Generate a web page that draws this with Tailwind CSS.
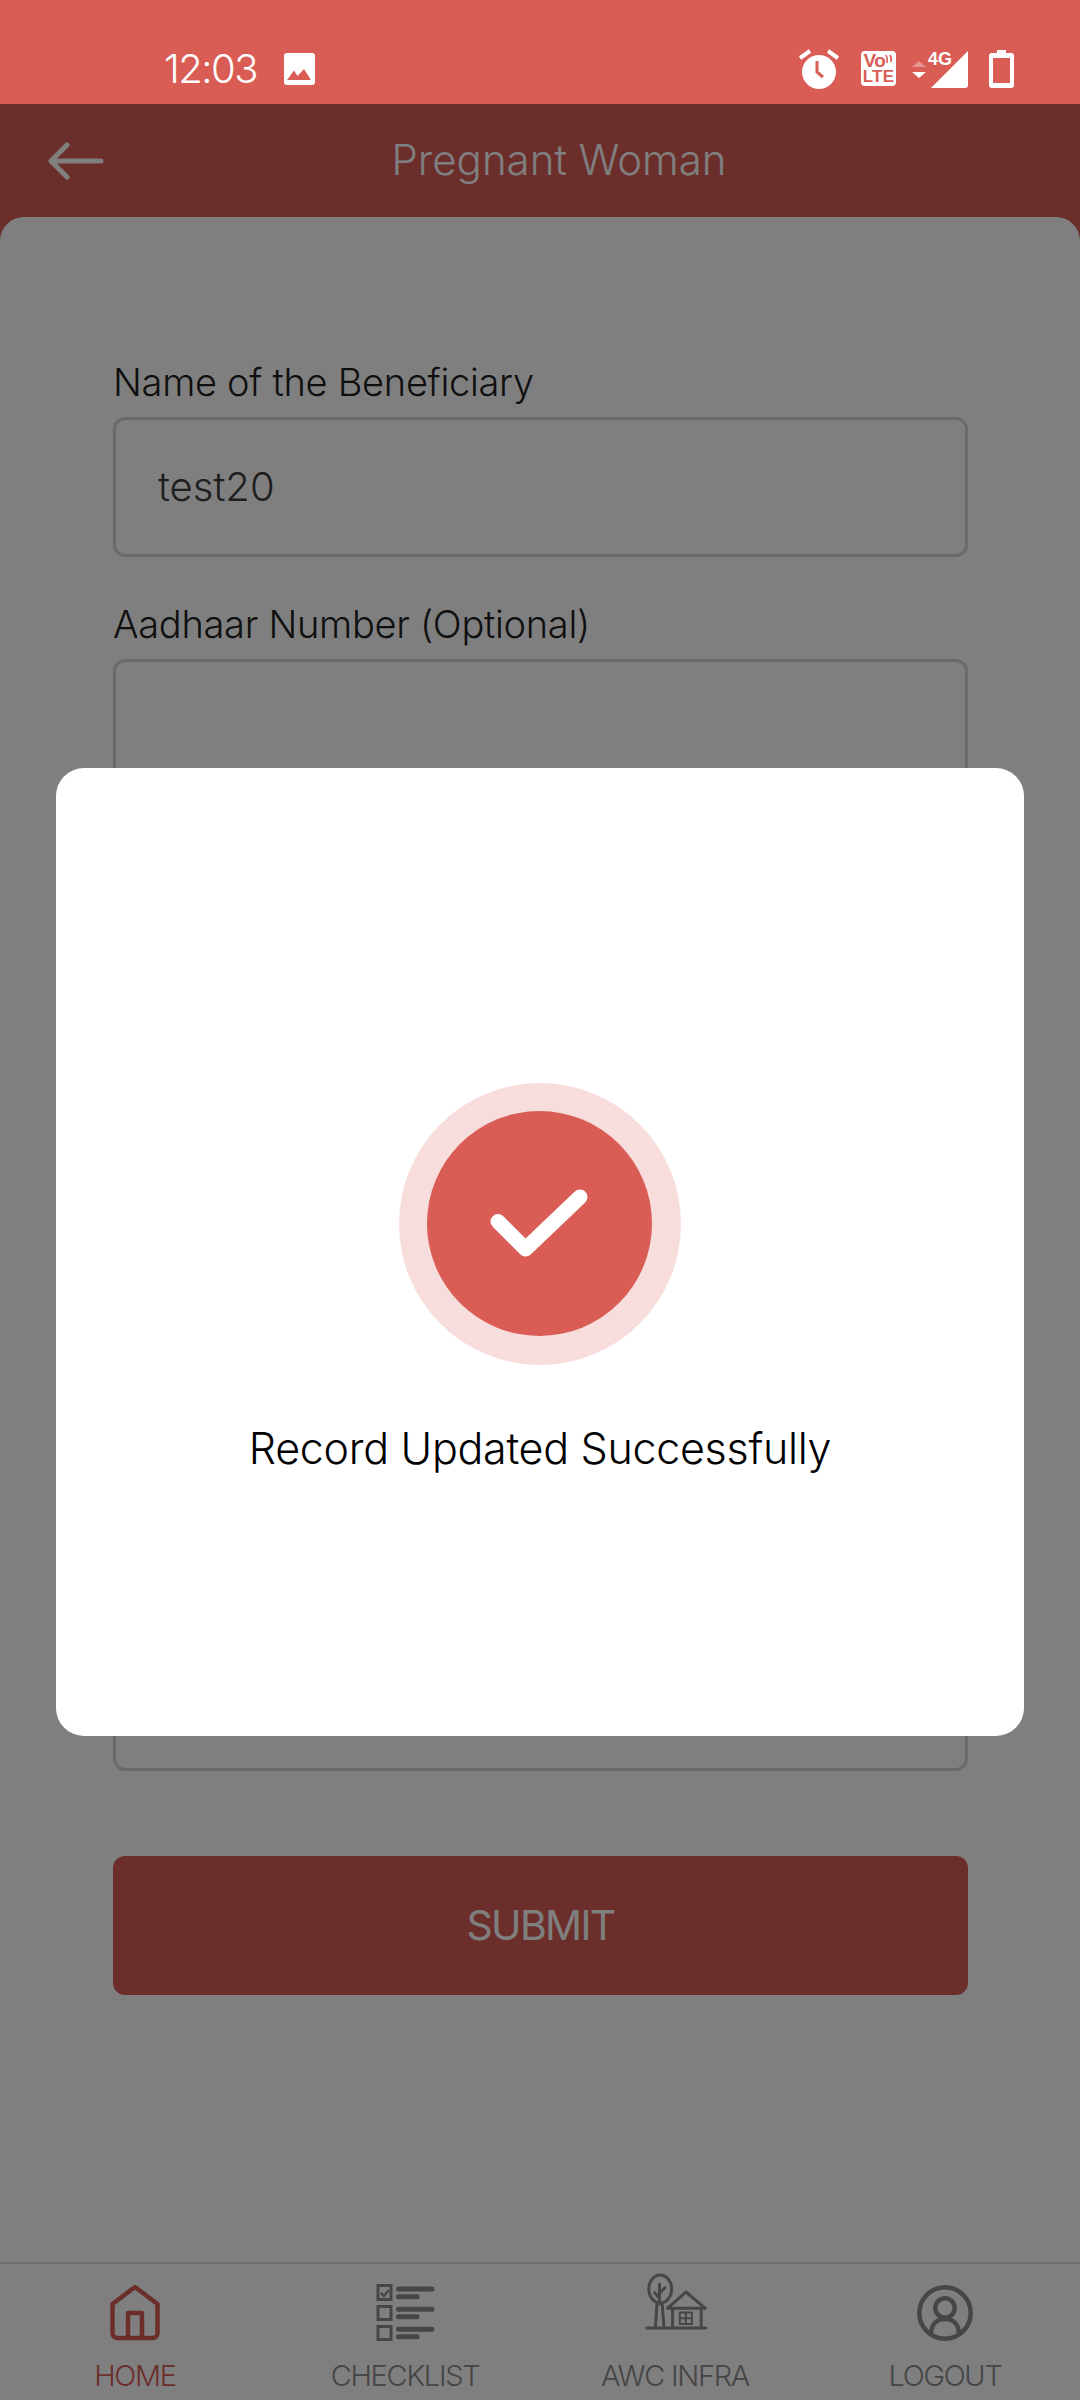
<!DOCTYPE html>
<html lang="en">

<head>
	<meta charset="UTF-8">
	<meta name="viewport" content="width=device-width, initial-scale=1.0">
	<title>Pregnant Woman</title>
	<script src="https://cdn.jsdelivr.net/npm/@tailwindcss/browser@4"></script>
</head>

<body class="bg-white font-['Inter',sans-serif] font-light">
	<div class="relative w-[1080px] h-[2400px] overflow-hidden flex flex-col bg-[#d95d55]">

		<!-- Status bar -->
		<div class="h-[104px] shrink-0 flex items-start pt-[49px] pl-[164px] pr-[66px] text-white relative z-20">
			<span class="text-[40px] leading-[40px] tracking-[-1.5px] w-[91px]">12:03</span>
			<svg class="ml-[29px] mt-[4px]" width="31" height="32" viewBox="0 0 31 32">
				<rect width="31" height="32" rx="3" fill="#fff" />
				<path d="M3 27 L10 17.5 L13.5 23 L20 16 L27 27 Z" fill="#d95d55" />
			</svg>
			<svg class="ml-auto" width="40" height="40" viewBox="0 0 40 40">
				<circle cx="20" cy="23" r="17" fill="#fff" />
				<path d="M1 9 L11 2 M29 2 L39 9" stroke="#fff" stroke-width="4" fill="none" />
				<path d="M18 12 V23 L24 28" stroke="#d95d55" stroke-width="3" fill="none" />
			</svg>
			<div class="relative ml-[22px] mt-[2px] w-[35px] h-[35px] rounded-[4px] bg-white text-[#d95d55] font-['Liberation_Sans',sans-serif] font-bold flex flex-col items-center">
				<span class="text-[19px] leading-[17px] tracking-[-0.5px] mt-[1px] -ml-[8px]">Vo</span>
				<span class="text-[17px] leading-[15px] tracking-[0.3px]">LTE</span>
				<svg class="absolute right-[2px] top-[3px]" width="9" height="11" viewBox="0 0 9 11" fill="none" stroke="#d95d55" stroke-width="1.6">
					<path d="M1 1 Q3 5 2 9 M5 1 Q7 4 6 8" />
				</svg>
			</div>
			<svg class="ml-[16px] mt-[12px]" width="14" height="18" viewBox="0 0 14 18">
				<path d="M0 6 L7 0 L14 6 Z" fill="#fff" fill-opacity="0.35" />
				<path d="M0 11 L14 11 L7 17 Z" fill="#fff" />
			</svg>
			<div class="relative ml-[2px] w-[40px] h-[38px] mt-[1px]">
				<svg width="40" height="38" viewBox="0 0 40 38">
					<path d="M3 38 L40 1 V35 a3 3 0 0 1 -3 3 Z" fill="#fff" />
				</svg>
				<span class="absolute left-0 top-[1px] text-[18px] leading-[16px] font-bold font-['Liberation_Sans',sans-serif]">4G</span>
			</div>
			<svg class="ml-[21px] mt-[1px]" width="25" height="38" viewBox="0 0 25 38">
				<path fill-rule="evenodd" fill="#fff" d="M8 0 H17 V3 H22 a3 3 0 0 1 3 3 V35 a3 3 0 0 1 -3 3 H3 a3 3 0 0 1 -3 -3 V6 a3 3 0 0 1 3 -3 H8 Z M4 8 V33 H21 V8 Z" />
			</svg>
		</div>

		<!-- App bar -->
		<div class="h-[113px] shrink-0 relative flex items-center justify-center text-white pb-[2px] pl-[38px]">
			<svg class="absolute left-[48px] top-[38px]" width="56" height="38" viewBox="0 0 56 38">
				<path d="M19 3 L3 19 L19 35 M3 19 H53" stroke="#fff" stroke-width="5" stroke-linecap="round" stroke-linejoin="round" fill="none" />
			</svg>
			<h1 class="text-[42px] leading-[56px] font-light">Pregnant Woman</h1>
		</div>

		<!-- Form card -->
		<div class="flex-1 bg-white rounded-t-[24px] pl-[113px] pr-[112px] pt-[140px]">
			<form class="flex flex-col gap-[42px] text-[38px] tracking-[-0.3px]">
				<div>
					<label class="block leading-[50px] text-[#1f1f1f]">Name of the Beneficiary</label>
					<div class="h-[140px] mt-[10px] border-[3px] border-[#d4d4d4] rounded-[12px] flex items-center pl-[42px] text-[40px] text-[#3f3f3f] tracking-normal">test20</div>
				</div>
				<div>
					<label class="block leading-[50px] text-[#1f1f1f]">Aadhaar Number (Optional)</label>
					<div class="h-[140px] mt-[10px] border-[3px] border-[#d4d4d4] rounded-[12px]"></div>
				</div>
				<!-- rows that stay behind the dialog -->
				<div class="h-[200px]"></div>
				<div class="h-[200px]"></div>
				<div class="h-[200px]"></div>
				<div class="pt-[64px]">
					<div class="h-[140px] border-[3px] border-[#d4d4d4] rounded-[12px]"></div>
				</div>
				<button type="button" class="mt-[43px] h-[139px] rounded-[12px] bg-[#d95d55] text-white text-[41px] font-normal tracking-[-1.7px]">SUBMIT</button>
			</form>
		</div>

		<!-- Bottom nav -->
		<nav class="h-[138px] shrink-0 bg-white border-t-2 border-[#dcdcdc] grid grid-cols-4 pt-[9px] text-[#8c8c8c] text-[29px] leading-[36px] tracking-[-1.3px]">
			<a class="flex flex-col items-center text-[#d95d55]">
				<svg width="80" height="70" viewBox="0 0 80 70" fill="none" stroke="#d95d55" stroke-width="4.5" stroke-linejoin="round">
					<path d="M17.5 31 L40 14 L62.5 31 V60 a5 5 0 0 1 -5 5 H22.5 a5 5 0 0 1 -5 -5 Z" />
					<path d="M33 65 V40 H47 V65" />
				</svg>
				<span class="mt-[15px]">HOME</span>
			</a>
			<a class="flex flex-col items-center">
				<svg width="80" height="70" viewBox="0 0 80 70" fill="none" stroke="#8c8c8c">
					<rect x="13" y="12.5" width="13" height="14" stroke-width="3" />
					<rect x="13" y="33.5" width="13" height="13" stroke-width="3" />
					<rect x="13" y="53.5" width="13" height="13" stroke-width="3" />
					<path d="M16 20 l3 3 l5 -6" stroke-width="2.5" />
					<path d="M33.5 16 H67 M33.5 23.7 H52 M33.5 36.3 H67 M33.5 43.7 H52 M33.5 56.3 H67 M33.5 63.7 H52" stroke-width="5" stroke-linecap="round" />
				</svg>
				<span class="mt-[15px]">CHECKLIST</span>
			</a>
			<a class="flex flex-col items-center">
				<svg width="80" height="70" viewBox="0 0 80 70" fill="none" stroke="#8c8c8c" stroke-width="3" stroke-linecap="round" stroke-linejoin="round">
					<ellipse cx="25.2" cy="16" rx="11.4" ry="14" />
					<path d="M22 31 L20.4 55 M27.2 31 L29 55 M24.5 11 V31 M19.7 19.7 L24.5 25.3 M30 14.7 L24.5 20.3" />
					<path d="M12 55 H71 M32.4 35.3 L51 19 L70.3 35.3 Z M37.6 35.3 V55 M66.2 35.3 V55" />
					<path d="M44.8 39.5 H56.9 V51 H44.8 Z M50.8 39.5 V51 M44.8 45.3 H56.9" stroke-width="2" />
				</svg>
				<span class="mt-[15px]">AWC INFRA</span>
			</a>
			<a class="flex flex-col items-center">
				<svg width="80" height="70" viewBox="0 0 80 70" fill="none" stroke="#8c8c8c" stroke-width="4.5">
					<circle cx="40" cy="40" r="25.7" />
					<circle cx="40" cy="35" r="9.7" />
					<path d="M26 62 C26 50 33 46 40 46 S54 50 54 62" />
				</svg>
				<span class="mt-[15px]">LOGOUT</span>
			</a>
		</nav>

		<!-- Dim layer + success dialog -->
		<div class="absolute inset-x-0 top-[104px] bottom-0 bg-black/50 flex items-center justify-center z-10">
			<div class="w-[968px] h-[968px] bg-white rounded-[28px] flex flex-col items-center pt-[315px]">
				<div class="w-[282px] h-[282px] rounded-full bg-[#f7dddc] flex items-center justify-center">
					<div class="w-[225px] h-[225px] mr-[1px] mb-[2px] rounded-full bg-[#d95d55] flex items-center justify-center">
						<svg width="225" height="225" viewBox="0 0 225 225" fill="none">
							<path d="M71 110.5 L98.5 138 L153 86" stroke="#fff" stroke-width="15" stroke-linecap="round" stroke-linejoin="round" />
						</svg>
					</div>
				</div>
				<p class="mt-[58px] text-[43px] leading-[50px] tracking-[-0.3px] text-black">Record Updated Successfully</p>
			</div>
		</div>
	</div>
</body>

</html>
